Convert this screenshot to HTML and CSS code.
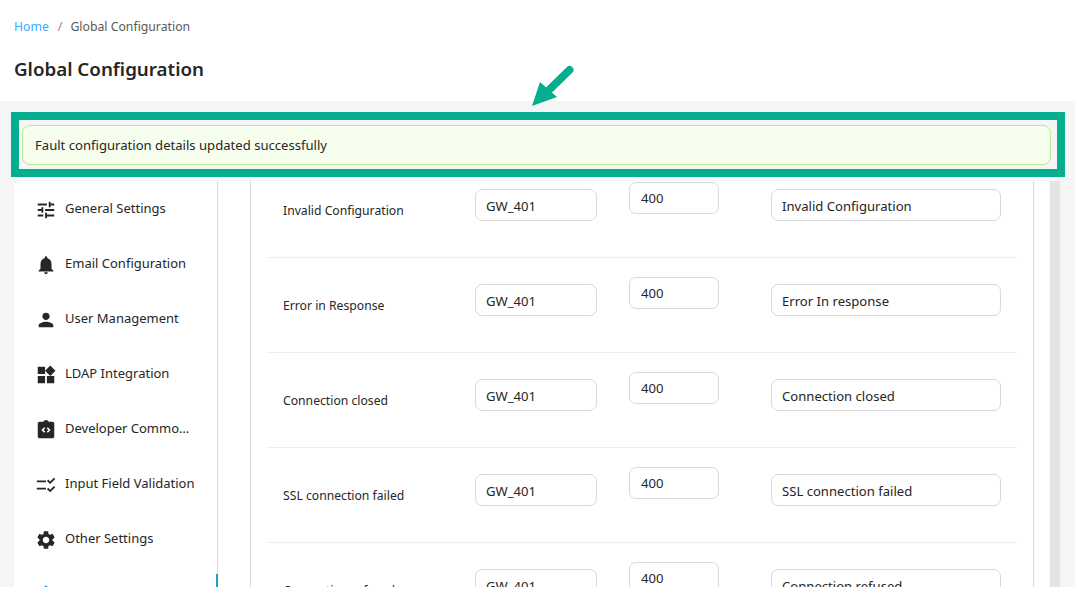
FILE: index.html
```html
<!DOCTYPE html>
<html lang="en">
<head>
<meta charset="utf-8">
<title>Global Configuration</title>
<link rel="stylesheet" href="styles.css">
</head>
<body>
<header class="page-header">
  <nav class="crumbs"><a class="crumb-link">Home</a><span class="crumb-sep">/</span><span class="crumb-current">Global Configuration</span></nav>
  <h1 class="page-title">Global Configuration</h1>
</header>
<main class="page-main">
  <div class="highlight">
    <div class="alert">Fault configuration details updated successfully</div>
  </div>
  <div class="workspace">
    <div class="card">
      <aside class="sidebar">
        <a class="nav-item"><svg class="nav-icon" viewBox="0 0 24 24"><path d="M3 17v2h6v-2H3zM3 5v2h10V5H3zm10 16v-2h8v-2h-8v-2h-2v6h2zM7 9v2H3v2h4v2h2V9H7zm14 4v-2H11v2h10zm-6-4h2V7h4V5h-4V3h-2v6z"/></svg><span class="nav-label">General Settings</span></a>
        <a class="nav-item"><svg class="nav-icon" viewBox="0 0 24 24"><path d="M12 22c1.1 0 2-.9 2-2h-4c0 1.1.89 2 2 2zm6-6v-5c0-3.07-1.64-5.64-4.5-6.32V4c0-.83-.67-1.5-1.5-1.5s-1.5.67-1.5 1.5v.68C7.63 5.36 6 7.92 6 11v5l-2 2v1h16v-1l-2-2z"/></svg><span class="nav-label">Email Configuration</span></a>
        <a class="nav-item"><svg class="nav-icon" viewBox="0 0 24 24"><path d="M12 12c2.21 0 4-1.79 4-4s-1.79-4-4-4-4 1.79-4 4 1.79 4 4 4zm0 2c-2.67 0-8 1.34-8 4v2h16v-2c0-2.66-5.33-4-8-4z"/></svg><span class="nav-label">User Management</span></a>
        <a class="nav-item"><svg class="nav-icon" viewBox="0 0 24 24"><path d="M13 13v8h8v-8h-8zM3 21h8v-8H3v8zM3 3v8h8V3H3zm13.66-1.31L11 7.34 16.66 13l5.66-5.66-5.66-5.65z"/></svg><span class="nav-label">LDAP Integration</span></a>
        <a class="nav-item"><svg class="nav-icon" viewBox="0 0 24 24"><path d="M19 3h-4.18C14.4 1.84 13.3 1 12 1s-2.4.84-2.82 2H5c-1.1 0-2 .9-2 2v14c0 1.1.9 2 2 2h14c1.1 0 2-.9 2-2V5c0-1.1-.9-2-2-2z"/><path class="icon-cut" d="M10.6 9.6 8.2 12l2.4 2.4M13.4 9.6l2.4 2.4-2.4 2.4"/></svg><span class="nav-label nav-label-short">Developer Commons</span></a>
        <a class="nav-item"><svg class="nav-icon" viewBox="0 0 24 24"><path d="M2 7h10v2H2zM2 15h10v2H2zM16.5 11 13 7.5l1.4-1.4 2.1 2.1 4.2-4.2 1.4 1.4zM16.5 20 13 16.5l1.4-1.4 2.1 2.1 4.2-4.2 1.4 1.4z"/></svg><span class="nav-label">Input Field Validation</span></a>
        <a class="nav-item"><svg class="nav-icon" viewBox="0 0 24 24"><path d="M19.14 12.94c.04-.3.06-.61.06-.94 0-.32-.02-.64-.07-.94l2.03-1.58c.18-.14.23-.41.12-.61l-1.92-3.32c-.12-.22-.37-.29-.59-.22l-2.39.96c-.5-.38-1.03-.7-1.62-.94l-.36-2.54c-.04-.24-.24-.41-.48-.41h-3.84c-.24 0-.43.17-.47.41l-.36 2.54c-.59.24-1.13.57-1.62.94l-2.39-.96c-.22-.08-.47 0-.59.22L2.74 8.87c-.12.21-.08.47.12.61l2.03 1.58c-.05.3-.09.63-.09.94s.02.64.07.94l-2.03 1.58c-.18.14-.23.41-.12.61l1.92 3.32c.12.22.37.29.59.22l2.39-.96c.5.38 1.03.7 1.62.94l.36 2.54c.05.24.24.41.48.41h3.84c.24 0 .44-.17.47-.41l.36-2.54c.59-.24 1.13-.56 1.62-.94l2.39.96c.22.08.47 0 .59-.22l1.92-3.32c.12-.22.07-.47-.12-.61l-2.01-1.58zM12 15.6c-1.98 0-3.6-1.62-3.6-3.6s1.62-3.6 3.6-3.6 3.6 1.62 3.6 3.6-1.62 3.6-3.6 3.6z"/></svg><span class="nav-label">Other Settings</span></a>
        <a class="nav-item nav-item-active"><svg class="nav-icon" viewBox="0 0 24 24"><path d="M1 21h22L13 2h-2L1 21zm12-3h-2v-2h2v2zm0-4h-2v-4h2v4z"/></svg><span class="nav-label">Fault Configuration</span></a>
      </aside>
      <section class="panel">
        <div class="panel-box">
          <div class="rows">
            <div class="row"><span class="row-label">Invalid Configuration</span><input class="field field-code" value="GW_401"><input class="field field-status" value="400"><input class="field field-message" value="Invalid Configuration"></div>
            <div class="row"><span class="row-label">Error in Response</span><input class="field field-code" value="GW_401"><input class="field field-status" value="400"><input class="field field-message" value="Error In response"></div>
            <div class="row"><span class="row-label">Connection closed</span><input class="field field-code" value="GW_401"><input class="field field-status" value="400"><input class="field field-message" value="Connection closed"></div>
            <div class="row"><span class="row-label">SSL connection failed</span><input class="field field-code" value="GW_401"><input class="field field-status" value="400"><input class="field field-message" value="SSL connection failed"></div>
            <div class="row"><span class="row-label">Connection refused</span><input class="field field-code" value="GW_401"><input class="field field-status" value="400"><input class="field field-message" value="Connection refused"></div>
          </div>
        </div>
      </section>
      <div class="scrollbar"></div>
    </div>
  </div>
</main>
<svg class="arrow" viewBox="0 0 60 60"><path class="arrow-shaft" d="M37.5 8 17 28"/><path class="arrow-head" d="M0 44 8 20 25 35z"/></svg>
</body>
</html>
```

FILE: styles.css
```css
* { box-sizing: border-box; }
html, body { margin: 0; padding: 0; }
body {
  position: relative;
  height: 589px;
  overflow: hidden;
  background: #fff;
  font-family: "Noto Sans", "Open Sans", sans-serif;
  color: #262626;
}
.page-header { height: 101px; padding: 18px 14px 0; }
.crumbs { display: flex; align-items: center; height: 18px; font-size: 12.25px; line-height: 18px; }
.crumb-link { color: #40a9ff; }
.crumb-sep { color: #8c8c8c; margin: 0 8px 0 9px; }
.crumb-current { color: #595959; }
.page-title { margin: 20px 0 0; font-size: 18.75px; line-height: 26px; font-weight: 600; color: #262626; }
.page-main { height: 486px; padding: 11px 0 0; background: #f5f5f5; overflow: hidden; }
.highlight {
  width: 1054px;
  height: 65px;
  margin-left: 11px;
  padding: 5px 6px 4px 3px;
  border: 8px solid #05ae8f;
}
.alert {
  display: flex;
  align-items: center;
  height: 40px;
  padding: 0 12px;
  background: #f6ffed;
  border: 1px solid #b7eb8f;
  border-radius: 8px;
  font-size: 13.1px;
}
.workspace { display: flex; margin: 4px 15px 0 14px; height: 406px; }
.card { display: flex; flex: 1; background: #fff; border-radius: 8px 0 0 0; overflow: hidden; }
.sidebar { width: 204px; flex: none; border-right: 1px solid #d9d9d9; }
.nav-item { position: relative; display: flex; align-items: center; height: 55px; padding: 0 16px 0 21px; font-size: 13px; color: #262626; }
.nav-icon { width: 22px; height: 22px; flex: none; margin-top: 2px; fill: #262626; }
.icon-cut { fill: none; stroke: #fff; stroke-width: 1.7; }
.nav-label { margin: 0 0 2px 8px; white-space: nowrap; overflow: hidden; text-overflow: ellipsis; }
.nav-label-short { max-width: 125px; }
.nav-item-active { color: #1890ff; }
.nav-item-active::after { content: ""; position: absolute; top: 8px; right: -1px; bottom: 0; width: 2px; background: #1f9fc4; }
.nav-item-active .nav-icon { margin-top: 3px; fill: #1890ff; }
.panel { flex: 1; padding-left: 32px; padding-right: 16px; min-width: 0; }
.panel-box { height: 100%; border-left: 1px solid #d9d9d9; border-right: 1px solid #d9d9d9; padding: 0 16px; overflow: hidden; }
.rows { margin-top: -18px; }
.row {
  display: flex;
  align-items: flex-start;
  height: 95px;
  padding: 19px 0 0 16px;
  border-bottom: 1px solid #eeeeee;
}
.row-label { width: 192px; flex: none; margin-top: 20px; font-size: 12.2px; line-height: 18px; color: #262626; }
.field {
  height: 32px;
  padding: 0 10px;
  background: #fff;
  border: 1px solid #d9d9d9;
  border-radius: 7px;
  font-family: inherit;
  font-size: 13.1px;
  color: #262626;
  outline: none;
}
.field-code { width: 122px; margin-top: 7px; padding-top: 2px; }
.field-status { width: 90px; margin-left: 32px; padding-left: 11px; }
.field-message { width: 230px; margin: 7px 0 0 52px; padding-top: 2px; }
.scrollbar { width: 10px; flex: none; background: #e4e4e4; }
.arrow { position: absolute; left: 532px; top: 62px; width: 60px; height: 60px; overflow: visible; }
.arrow-shaft { fill: none; stroke: #05ae8f; stroke-width: 8; stroke-linecap: round; }
.arrow-head { fill: #05ae8f; }
```
